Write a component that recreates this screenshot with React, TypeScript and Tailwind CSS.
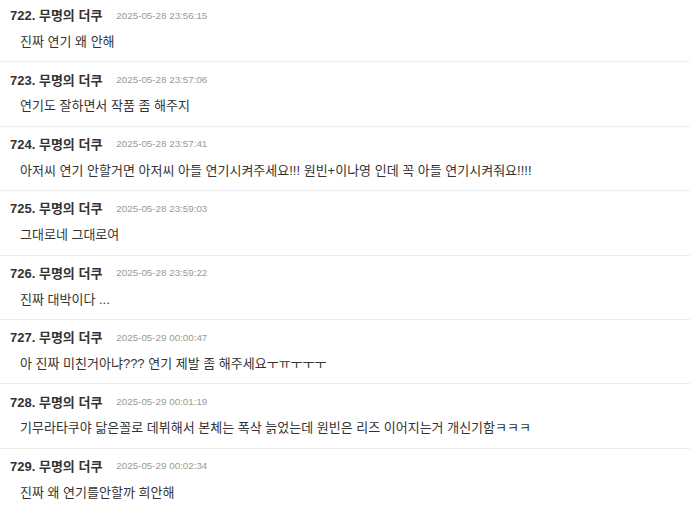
const comments = [
  { no: 722, time: '2025-05-28 23:56:15', text: '진짜 연기 왜 안해' },
  { no: 723, time: '2025-05-28 23:57:06', text: '연기도 잘하면서 작품 좀 해주지' },
  { no: 724, time: '2025-05-28 23:57:41', text: '아저씨 연기 안할거면 아저씨 아들 연기시켜주세요!!! 원빈+이나영 인데 꼭 아들 연기시켜줘요!!!!' },
  { no: 725, time: '2025-05-28 23:59:03', text: '그대로네 그대로여' },
  { no: 726, time: '2025-05-28 23:59:22', text: '진짜 대박이다 ...' },
  { no: 727, time: '2025-05-29 00:00:47', text: '아 진짜 미친거아냐??? 연기 제발 좀 해주세요ㅜㅠㅜㅜㅜ' },
  { no: 728, time: '2025-05-29 00:01:19', text: '기무라타쿠야 닮은꼴로 데뷔해서 본체는 폭삭 늙었는데 원빈은 리즈 이어지는거 개신기함ㅋㅋㅋ' },
  { no: 729, time: '2025-05-29 00:02:34', text: '진짜 왜 연기를안할까 희안해' },
]

export default function App() {
  return (
    <div
      className="w-[690px] h-[510px] overflow-hidden bg-white"
      style={{ fontFamily: '"Liberation Sans", "Noto Sans CJK KR", sans-serif' }}
    >
      <ul className="-mt-[2px]">
        {comments.map((c) => (
          <li key={c.no} className="h-[64.4px] border-b border-[#ededed] pt-[9px] pl-[10px]">
            <div className="flex items-center h-[18px]">
              <span className="text-[13px] font-bold text-[#333]">
                {c.no}. 무명의 더쿠
              </span>
              <span className="ml-[14px] text-[9.8px] text-[#999]">{c.time}</span>
            </div>
            <p className="mt-[7px] h-[20px] leading-[20px] pl-[10px] text-[13px] text-[#333]">
              {c.text}
            </p>
          </li>
        ))}
      </ul>
    </div>
  )
}
